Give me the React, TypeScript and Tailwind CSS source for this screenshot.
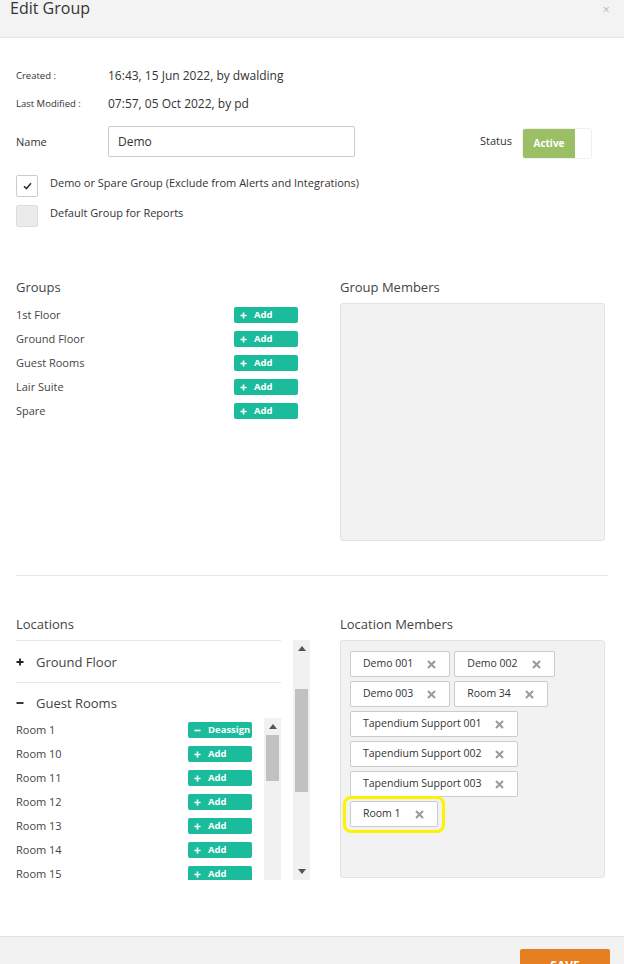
import React from "react";

const Plus = ({ color = "white", size = 7, w = 1.6 }: { color?: string; size?: number; w?: number }) => (
  <svg width={size} height={size} viewBox="0 0 8 8" className="shrink-0">
    <path d="M4 0.5v7M0.5 4h7" stroke={color} strokeWidth={w * (8 / size)} />
  </svg>
);
const Minus = ({ color = "white", size = 7, w = 1.6 }: { color?: string; size?: number; w?: number }) => (
  <svg width={size} height={size} viewBox="0 0 8 8" className="shrink-0">
    <path d="M0.5 4h7" stroke={color} strokeWidth={w * (8 / size)} />
  </svg>
);

function ActionBtn({ label = "Add", minus = false }: { label?: string; minus?: boolean }) {
  return (
    <div className="w-16 h-4 shrink-0 rounded-[2px] bg-[#1abc9c] flex items-center pl-[6px] gap-[7px] text-white text-[9.5px] font-bold leading-none">
      {minus ? <Minus /> : <Plus />}
      <span>{label}</span>
    </div>
  );
}

function UpArrow() {
  return (
    <svg width="8" height="5" viewBox="0 0 8 5">
      <path d="M0 5L4 0L8 5Z" fill="#555" />
    </svg>
  );
}
function DownArrow() {
  return (
    <svg width="8" height="5" viewBox="0 0 8 5">
      <path d="M0 0L4 5L8 0Z" fill="#555" />
    </svg>
  );
}

function Chip({ label, highlight = false }: { label: string; highlight?: boolean }) {
  return (
    <div className="relative">
      <div className="h-[26px] border border-[#cccccc] rounded-[2px] bg-white flex items-center pl-[12px] pr-[13px] gap-[14px] text-[10.5px] text-[#333] whitespace-nowrap">
        <span>{label}</span>
        <svg width="9" height="9" viewBox="0 0 9 9" className="shrink-0">
          <path d="M1 1L8 8M8 1L1 8" stroke="#9a9a9a" strokeWidth="2" />
        </svg>
      </div>
      {highlight && (
        <span className="absolute -left-[7px] -right-[7px] -top-[5px] -bottom-[6px] border-[3px] border-[#fff200] rounded-[8px] pointer-events-none" />
      )}
    </div>
  );
}

export default function App() {
  const groups = ["1st Floor", "Ground Floor", "Guest Rooms", "Lair Suite", "Spare"];
  const rooms = ["Room 1", "Room 10", "Room 11", "Room 12", "Room 13", "Room 14", "Room 15"];
  const chips = [
    "Demo 001",
    "Demo 002",
    "Demo 003",
    "Room 34",
    "Tapendium Support 001",
    "Tapendium Support 002",
    "Tapendium Support 003",
  ];
  return (
    <div className="w-[624px] h-[964px] overflow-hidden bg-white font-['Open_Sans',sans-serif] text-[#333]">
      {/* Header */}
      <div className="h-[38px] bg-[#f3f3f3] border-b border-[#e3e3e3] flex items-start justify-between pl-[10px] pr-[14px]">
        <div className="text-[16px] leading-[18px] mt-[-1px] text-[#333]">Edit Group</div>
        <div className="text-[13px] leading-[18px] text-[#bbb] mt-[0px]">×</div>
      </div>

      {/* Body */}
      <div className="px-4 flex flex-col">
        <div className="mt-[30px] h-4 flex items-center">
          <div className="w-[92px] text-[9.5px] text-[#333]">Created :</div>
          <div className="text-[12px] text-[#333]">16:43, 15 Jun 2022, by dwalding</div>
        </div>
        <div className="mt-[12px] h-4 flex items-center">
          <div className="w-[92px] text-[9.5px] text-[#333]">Last Modified :</div>
          <div className="text-[12px] text-[#333]">07:57, 05 Oct 2022, by pd</div>
        </div>

        <div className="mt-[14px] h-[31px] flex items-center">
          <div className="w-[92px] text-[11px] pt-[1px]">Name</div>
          <div className="w-[247px] h-[31px] border border-[#cccccc] rounded-[2px] flex items-center pl-[9px] text-[12px] text-[#333]">
            Demo
          </div>
          <div className="flex-1" />
          <div className="text-[11px] mr-[10px]">Status</div>
          <div className="w-[70px] h-[31px] border border-[#f0f0f0] rounded-[3px] flex mr-[16px] mt-[3px] overflow-hidden">
            <div className="w-[52px] h-full bg-[#9bbf64] flex items-center justify-center text-white text-[10px] font-bold pt-[1px]">
              Active
            </div>
            <div className="flex-1 bg-white" />
          </div>
        </div>

        <div className="mt-[18px] h-[22px] flex items-start">
          <div className="w-[22px] h-[22px] border border-[#cccccc] rounded-[2px] bg-white flex items-center justify-center">
            <svg width="9" height="8" viewBox="0 0 9 8">
              <path d="M1 4.2L3.4 6.6L8 1.2" stroke="#333" strokeWidth="1.6" fill="none" />
            </svg>
          </div>
          <div className="ml-[12px] text-[11px] leading-[16px] text-[#333]">Demo or Spare Group (Exclude from Alerts and Integrations)</div>
        </div>
        <div className="mt-[8px] h-[22px] flex items-start">
          <div className="w-[22px] h-[22px] border border-[#dddddd] rounded-[2px] bg-[#ebebeb]" />
          <div className="ml-[12px] text-[11px] leading-[16px] text-[#333]">Default Group for Reports</div>
        </div>

        {/* Groups */}
        <div className="mt-[51px] grid grid-cols-[294px_265px] gap-x-[30px]">
          <div className="flex flex-col">
            <div className="h-[18px] leading-[18px] text-[13px] text-[#444]">Groups</div>
            <div className="mt-[7px] w-[282px] flex flex-col">
              {groups.map((g) => (
                <div key={g} className="h-6 flex items-center justify-between">
                  <span className="text-[11px] text-[#444]">{g}</span>
                  <ActionBtn />
                </div>
              ))}
            </div>
          </div>
          <div className="flex flex-col">
            <div className="h-[18px] leading-[18px] text-[13px] text-[#444]">Group Members</div>
            <div className="mt-[7px] h-[238px] bg-[#f2f2f2] border border-[#e2e2e2] rounded-[3px]" />
          </div>
        </div>

        <div className="mt-[34px] h-px bg-[#e8e8e8]" />

        {/* Locations */}
        <div className="mt-[39px] grid grid-cols-[294px_265px] gap-x-[30px]">
          <div className="flex flex-col">
            <div className="h-[18px] leading-[18px] text-[13px] text-[#444]">Locations</div>
            <div className="mt-[7px] h-[240px] flex gap-[12px] overflow-hidden">
              <div className="w-[265px] flex flex-col">
                <div className="border-t border-[#e6e6e6] pt-[12px] pb-[11px] flex items-center leading-[18px]">
                  <Plus color="#222" size={8} w={1.8} />
                  <span className="ml-[12px] text-[13px] text-[#444]">Ground Floor</span>
                </div>
                <div className="border-t border-[#e6e6e6] pt-[11px] pb-[6px] flex items-center leading-[18px]">
                  <Minus color="#222" size={8} w={1.8} />
                  <span className="ml-[12px] text-[13px] text-[#444]">Guest Rooms</span>
                </div>
                <div className="flex-1 min-h-0 flex gap-[12px] overflow-hidden">
                  <div className="w-[236px] flex flex-col">
                    {rooms.map((r, i) => (
                      <div key={r} className="h-6 shrink-0 flex items-center justify-between">
                        <span className="text-[11px] text-[#444] pt-[1px]">{r}</span>
                        {i === 0 ? <ActionBtn label="Deassign" minus /> : <ActionBtn />}
                      </div>
                    ))}
                  </div>
                  <div className="w-[17px] bg-[#f1f1f1] flex flex-col items-center">
                    <div className="h-[17px] flex items-center justify-center">
                      <UpArrow />
                    </div>
                    <div className="w-[13px] h-[46px] bg-[#c1c1c1]" />
                  </div>
                </div>
              </div>
              <div className="w-[17px] bg-[#f1f1f1] flex flex-col items-center">
                <div className="h-[17px] flex items-center justify-center">
                  <UpArrow />
                </div>
                <div className="h-[32px]" />
                <div className="w-[13px] h-[103px] bg-[#c1c1c1]" />
                <div className="flex-1" />
                <div className="h-[17px] flex items-center justify-center">
                  <DownArrow />
                </div>
              </div>
            </div>
          </div>
          <div className="flex flex-col">
            <div className="h-[18px] leading-[18px] text-[13px] text-[#444]">Location Members</div>
            <div className="mt-[7px] h-[238px] bg-[#f2f2f2] border border-[#e2e2e2] rounded-[3px] pt-[10px] pl-[9px] pr-[9px]">
              <div className="flex flex-wrap gap-[4px]">
                {chips.map((c) => (
                  <Chip key={c} label={c} />
                ))}
                <Chip label="Room 1" highlight />
              </div>
            </div>
          </div>
        </div>
      </div>

      {/* Footer */}
      <div className="mt-[56px] border-t border-[#e3e3e3] bg-[#f2f2f2] h-[60px] flex justify-end pr-[14px] pt-[12px]">
        <div className="w-[90px] h-[34px] rounded-[2px] bg-[#e67e22] text-white font-bold text-[12px] flex items-center justify-center">
          SAVE
        </div>
      </div>
    </div>
  );
}
